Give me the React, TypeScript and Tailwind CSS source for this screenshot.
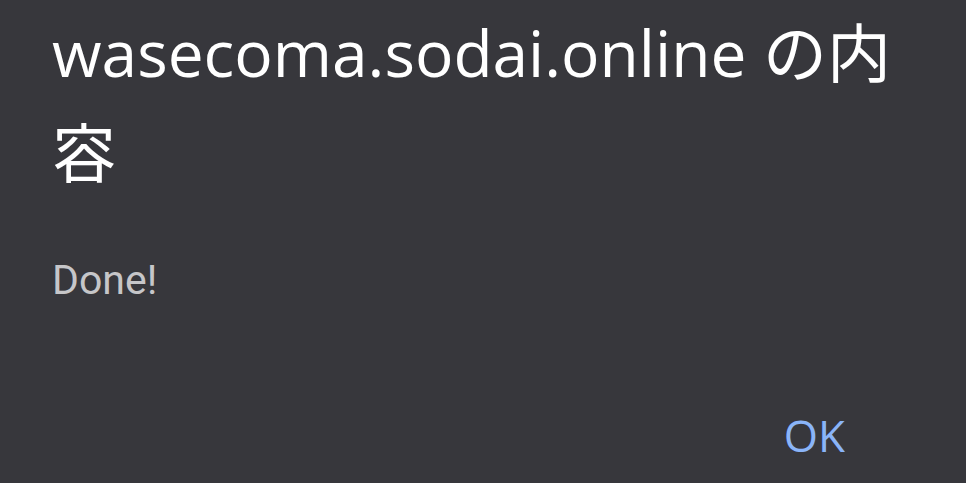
export default function App() {
  return (
    <div className="w-[966px] h-[483px] bg-[#37373c] flex flex-col pl-[52px] overflow-hidden">
      <div className="mt-[3px] w-[850px] text-[64px] leading-[100px] text-white font-['Open_Sans','Noto_Sans_CJK_JP',sans-serif]">
        wasecoma.sodai.online の内容
      </div>
      <div className="mt-[53px] text-[41px] leading-[48px] text-[#c6c6c9] font-['Roboto','Noto_Sans_CJK_JP',sans-serif]">
        Done!
      </div>
      <div className="flex justify-end mt-auto mb-[23px] pr-[121px]">
        <span className="text-[44px] leading-[50px] font-medium text-[#8ab4f8] font-['Open_Sans',sans-serif]">
          OK
        </span>
      </div>
    </div>
  );
}
